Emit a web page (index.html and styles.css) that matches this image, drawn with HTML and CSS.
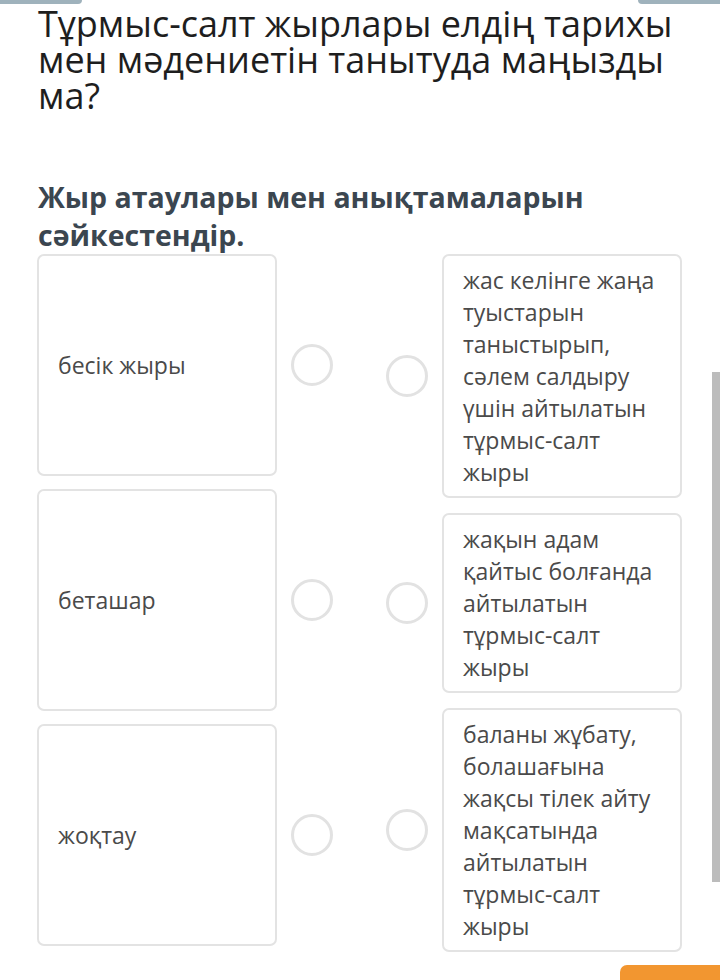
FILE: index.html
```html
<!DOCTYPE html>
<html lang="kk">
<head>
    <meta charset="UTF-8">
    <meta name="viewport" content="width=device-width, initial-scale=1.0">
    <title>Сәйкестендіру</title>
    <link rel="stylesheet" href="styles.css">
</head>
<body>
    <div class="top-tabs">
        <span class="tab tab-left"></span>
        <span class="tab tab-right"></span>
    </div>

    <div class="content">
        <h1 class="question">Тұрмыс-салт жырлары елдің тарихы мен мәдениетін танытуда маңызды ма?</h1>
        <h2 class="task">Жыр атаулары мен анықтамаларын сәйкестендір.</h2>

        <div class="match">
            <div class="match-col left-col">
                <div class="match-row">
                    <div class="card card-left">бесік жыры</div>
                    <span class="dot"></span>
                </div>
                <div class="match-row">
                    <div class="card card-left">беташар</div>
                    <span class="dot"></span>
                </div>
                <div class="match-row">
                    <div class="card card-left">жоқтау</div>
                    <span class="dot"></span>
                </div>
            </div>

            <div class="match-col right-col">
                <div class="match-row">
                    <span class="dot"></span>
                    <div class="card card-right">жас келінге жаңа туыстарын таныстырып, сәлем салдыру үшін айтылатын тұрмыс-салт жыры</div>
                </div>
                <div class="match-row">
                    <span class="dot"></span>
                    <div class="card card-right">жақын адам қайтыс болғанда айтылатын тұрмыс-салт жыры</div>
                </div>
                <div class="match-row">
                    <span class="dot"></span>
                    <div class="card card-right">баланы жұбату, болашағына жақсы тілек айту мақсатында айтылатын тұрмыс-салт жыры</div>
                </div>
            </div>
        </div>
    </div>

    <div class="scroll-thumb"></div>
    <div class="next-btn"></div>
</body>
</html>
```

FILE: styles.css
```css
body {
    font-family: "Open Sans", "Noto Sans", sans-serif;
    background-color: #ffffff;
    margin: 0;
    padding: 0;
    overflow: hidden;
}
.top-tabs {
    display: flex;
    justify-content: space-between;
    height: 4px;
}
.tab {
    background-color: #9fb2bc;
    height: 4px;
}
.tab-left {
    width: 82px;
    border-radius: 0 0 6px 0;
}
.tab-right {
    width: 82px;
    border-radius: 0 0 0 6px;
}
.content {
    padding: 0 37px;
}
.question {
    font-size: 36px;
    font-weight: 400;
    line-height: 36px;
    color: #1e1e1e;
    margin: 2px 0 0 1px;
}
.task {
    font-size: 28.5px;
    font-weight: 700;
    line-height: 38px;
    color: #3b4650;
    margin: 64px 0 0 1px;
}
.match {
    display: flex;
}
.match-col {
    display: flex;
    flex-direction: column;
}
.left-col {
    gap: 13px;
}
.right-col {
    gap: 15px;
    margin-left: 53px;
}
.match-row {
    display: flex;
    align-items: center;
    gap: 14px;
}
.card {
    width: 240px;
    box-sizing: border-box;
    border: 2px solid #e3e3e3;
    border-radius: 7px;
    color: #4a4a4a;
    font-size: 23px;
    line-height: 32px;
}
.card-left {
    height: 222px;
    display: flex;
    align-items: center;
    padding: 0 19px;
}
.card-right {
    padding: 8px 19px;
}
.dot {
    width: 42px;
    height: 42px;
    box-sizing: border-box;
    border: 3px solid #e2e2e2;
    border-radius: 50%;
    flex-shrink: 0;
}
.scroll-thumb {
    position: fixed;
    top: 372px;
    right: 0;
    width: 8px;
    height: 510px;
    background-color: #bcbcbc;
}
.next-btn {
    position: fixed;
    left: 620px;
    bottom: 0;
    width: 100px;
    height: 15px;
    background-color: #f29630;
    border-radius: 7px 0 0 0;
}
```
